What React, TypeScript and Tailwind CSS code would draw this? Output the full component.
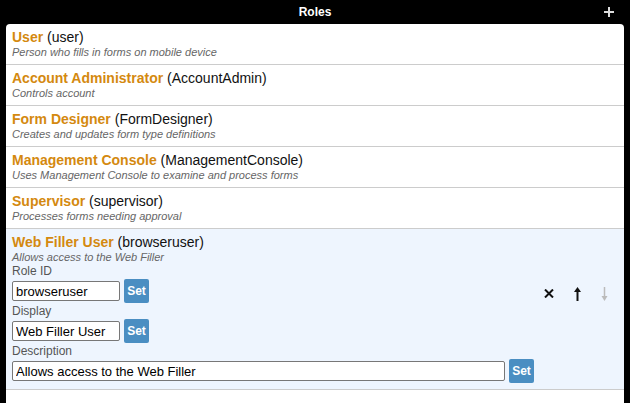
import React from "react";

type Role = { name: string; id: string; desc: string };

const roles: Role[] = [
	{ name: "User", id: "user", desc: "Person who fills in forms on mobile device" },
	{ name: "Account Administrator", id: "AccountAdmin", desc: "Controls account" },
	{ name: "Form Designer", id: "FormDesigner", desc: "Creates and updates form type definitions" },
	{ name: "Management Console", id: "ManagementConsole", desc: "Uses Management Console to examine and process forms" },
	{ name: "Supervisor", id: "supervisor", desc: "Processes forms needing approval" },
];

function RoleHeading({ role }: { role: Role }) {
	return (
		<>
			<div className="text-[14px] leading-[17px] whitespace-nowrap">
				<span className="font-bold text-[#d4890f]">{role.name}</span>{" "}
				<span className="text-[#111]">({role.id})</span>
			</div>
			<div className="text-[11px] leading-[12px] italic text-[#666] whitespace-nowrap">{role.desc}</div>
		</>
	);
}

function SetButton() {
	return (
		<button className="h-[24px] w-[25px] rounded-[2px] bg-[#4a8ec2] text-white text-[12px] font-bold leading-none">
			Set
		</button>
	);
}

function Field({ label, value, width }: { label: string; value: string; width: string }) {
	return (
		<div>
			<div className="text-[12px] leading-[16px] text-[#555]">{label}</div>
			<div className="flex items-center gap-[4px] h-[24px]">
				<input
					readOnly
					value={value}
					className={`${width} h-[20px] border border-[#777] rounded-[2px] bg-white px-[3px] text-[13px] text-black outline-none`}
				/>
				<SetButton />
			</div>
		</div>
	);
}

export default function App() {
	const selected: Role = { name: "Web Filler User", id: "browseruser", desc: "Allows access to the Web Filler" };

	return (
		<div className="w-[630px] h-[403px] bg-black overflow-hidden font-['Liberation_Sans',Arial,sans-serif]">
			<div className="relative h-[24px] flex items-center justify-center">
				<span className="text-white text-[12px] font-bold">Roles</span>
				<svg className="absolute right-[16px] top-[7px]" width="10" height="10" viewBox="0 0 10 10">
					<path d="M5 0v10M0 5h10" stroke="#ddd" strokeWidth="2" />
				</svg>
			</div>

			<div className="mx-[6px] h-[379px] bg-white rounded-t-[4px]">
				{roles.map((r) => (
					<div key={r.id} className="h-[41px] px-[6px] pt-[5px] border-b border-[#ccc]">
						<RoleHeading role={r} />
					</div>
				))}

				<div className="px-[6px] pt-[5px] pb-[6px] bg-[#eef5fe] border-b border-[#ccc]">
					<RoleHeading role={selected} />
					<div className="flex">
						<Field label="Role ID" value="browseruser" width="w-[108px]" />
						<div className="ml-auto mt-[21px] flex items-center gap-[20px] pr-[10px]">
							<svg width="10" height="9" viewBox="0 0 10 9">
								<path d="M1 0.5l8 8M9 0.5l-8 8" stroke="#111" strokeWidth="2" />
							</svg>
							<svg width="7" height="14" viewBox="0 0 7 14">
								<path d="M3.5 14V3" stroke="#111" strokeWidth="2" />
								<path d="M0 5L3.5 0L7 5Z" fill="#111" />
							</svg>
							<svg width="7" height="14" viewBox="0 0 7 14">
								<path d="M3.5 0v11" stroke="#bbb" strokeWidth="1.5" />
								<path d="M0.5 9L3.5 14L6.5 9Z" fill="#bbb" />
							</svg>
						</div>
					</div>
					<Field label="Display" value="Web Filler User" width="w-[108px]" />
					<Field label="Description" value="Allows access to the Web Filler" width="w-[493px]" />
				</div>
			</div>
		</div>
	);
}
